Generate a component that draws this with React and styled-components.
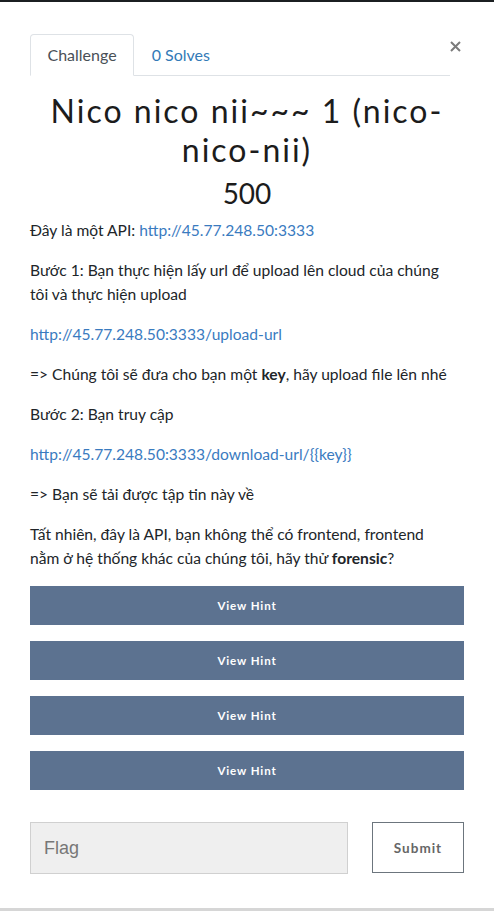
import React from "react";
import styled, { createGlobalStyle } from "styled-components";

const Global = createGlobalStyle`
  html, body { margin: 0; padding: 0; background: #fff; }
  body { font-family: Lato, "Noto Sans", sans-serif; color: #212529; }
  * { box-sizing: border-box; }
`;

const Page = styled.div`
  display: flex;
  flex-direction: column;
  min-height: 100vh;
`;

const TopBar = styled.div`
  height: 2px;
  background: #1b1f21;
`;

const BottomBar = styled.div`
  height: 3px;
  background: #d6d6d6;
`;

const Modal = styled.div`
  flex: 1;
  background: #fff;
  padding: 32px 30px 0;
`;

const Header = styled.div`
  display: flex;
  align-items: flex-start;
`;

const Tabs = styled.ul`
  list-style: none;
  margin: 0;
  padding: 0;
  display: flex;
  flex: 1;
  border-bottom: 1px solid #dee2e6;
`;

const Tab = styled.li`
  margin-bottom: -1px;
  padding: 8px 16.5px;
  font-size: 16px;
  line-height: 24px;
  border: 1px solid ${(p) => (p.$active ? "#dee2e6" : "transparent")};
  border-bottom-color: ${(p) => (p.$active ? "#fff" : "transparent")};
  border-radius: 4px 4px 0 0;
  background: ${(p) => (p.$active ? "#fff" : "transparent")};
  color: ${(p) => (p.$active ? "#495057" : "#337ab7")};
`;

const Close = styled.button`
  width: 14px;
  padding: 0;
  margin: 7px 0 0;
  border: 0;
  background: transparent;
  display: flex;
  justify-content: flex-start;
`;

const Title = styled.h2`
  margin: 16px 0 0;
  text-align: center;
  font-family: Lato, sans-serif;
  font-weight: 400;
  font-size: 32px;
  line-height: 38.5px;
  letter-spacing: 2px;
  color: #1c1c1c;
`;

const Value = styled.h3`
  margin: 7px 0 0;
  text-align: center;
  font-weight: 400;
  font-size: 28px;
  line-height: 34px;
  color: #1c1c1c;
`;

const Description = styled.div`
  margin-top: 8px;
  padding-right: 11px;
  font-size: 15.6px;
  line-height: 24.5px;
`;

const P = styled.p`
  margin: 0 0 15.4px;
`;

const Link = styled.a`
  color: #3a7bbf;
  text-decoration: none;
`;

const Strong = styled.strong`
  font-weight: 700;
`;

const Hints = styled.div`
  display: flex;
  flex-direction: column;
  gap: 16px;
  margin-top: 15px;
`;

const HintButton = styled.button`
  height: 39px;
  border: 0;
  background: #5c7290;
  color: #fff;
  font-family: Lato, sans-serif;
  font-weight: 700;
  font-size: 11.5px;
  letter-spacing: 0.9px;
`;

const FlagForm = styled.form`
  display: grid;
  grid-template-columns: 1fr 92px;
  gap: 24px;
  margin-top: 32px;
`;

const FlagInput = styled.input`
  height: 52px;
  background: #efefef;
  border: 1px solid #d0d0d0;
  padding: 0 13px;
  font-family: "Liberation Sans", Arial, sans-serif;
  font-size: 18px;
  color: #333;
  &::placeholder { color: #777; }
`;

const SubmitButton = styled.button`
  height: 51px;
  background: #fff;
  border: 1px solid #6c757d;
  color: #666;
  font-family: Lato, sans-serif;
  font-weight: 700;
  font-size: 13.5px;
  letter-spacing: 1px;
`;

export default function App() {
  return (
    <Page>
      <Global />
      <TopBar />
      <Modal>
        <Header>
          <Tabs>
            <Tab $active>Challenge</Tab>
            <Tab>0 Solves</Tab>
          </Tabs>
          <Close aria-label="Close">
            <svg width="11" height="11" viewBox="0 0 11 11">
              <path d="M1 1 L10 10 M10 1 L1 10" stroke="#7b7b7b" strokeWidth="2" strokeLinecap="butt" />
            </svg>
          </Close>
        </Header>
        <Title>Nico nico nii~~~ 1 (nico-nico-nii)</Title>
        <Value>500</Value>
        <Description>
          <P>
            Đây là một API: <Link href="#">http://45.77.248.50:3333</Link>
          </P>
          <P>Bước 1: Bạn thực hiện lấy url để upload lên cloud của chúng tôi và thực hiện upload</P>
          <P>
            <Link href="#">http://45.77.248.50:3333/upload-url</Link>
          </P>
          <P>
            =&gt; Chúng tôi sẽ đưa cho bạn một <Strong>key</Strong>, hãy upload file lên nhé
          </P>
          <P>Bước 2: Bạn truy cập</P>
          <P>
            <Link href="#">http://45.77.248.50:3333/download-url/{"{{key}}"}</Link>
          </P>
          <P>=&gt; Bạn sẽ tải được tập tin này về</P>
          <P>
            Tất nhiên, đây là API, bạn không thể có frontend, frontend nằm ở hệ thống khác của chúng tôi, hãy thử{" "}
            <Strong>forensic</Strong>?
          </P>
        </Description>
        <Hints>
          {[0, 1, 2, 3].map((i) => (
            <HintButton key={i}>View Hint</HintButton>
          ))}
        </Hints>
        <FlagForm onSubmit={(e) => e.preventDefault()}>
          <FlagInput placeholder="Flag" />
          <SubmitButton type="submit">Submit</SubmitButton>
        </FlagForm>
      </Modal>
      <BottomBar />
    </Page>
  );
}
